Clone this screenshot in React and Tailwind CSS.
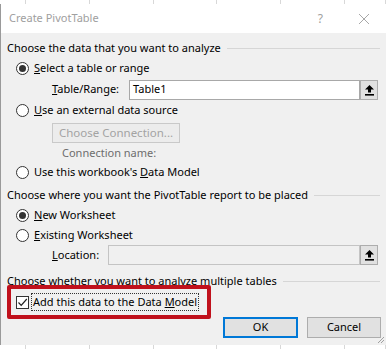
import { useState } from "react";

const FONT = { fontFamily: '"Noto Sans", "Open Sans", Arial, sans-serif' };

function GridStrip({ className }) {
  const cells = [26, 64, 64, 63, 64, 64, 41];
  return (
    <div className={`flex bg-white ${className}`}>
      {cells.map((w, i) => (
        <div key={i} className="h-full border-r border-[#d8d8d8]" style={{ width: w }} />
      ))}
    </div>
  );
}

function Radio({ checked }) {
  return (
    <span className="w-[13px] h-[13px] rounded-full border border-[#333] bg-white flex items-center justify-center shrink-0">
      {checked && <span className="w-[7px] h-[7px] rounded-full bg-[#333]" />}
    </span>
  );
}

function Section({ title }) {
  return (
    <div className="h-[20px] flex items-center pr-[6px]">
      <span className="whitespace-nowrap">{title}</span>
      <span className="flex-1 h-px bg-[#d6d6d6] ml-[6px] mt-[1px]" />
    </div>
  );
}

function RefButton() {
  return (
    <div className="w-[18px] h-[20px] bg-[#e1e1e1] border border-[#adadad] flex items-center justify-center shrink-0">
      <svg width="11" height="12" viewBox="0 0 11 12">
        <path d="M5.5 1 L10 5.5 L7 5.5 L7 8.5 L4 8.5 L4 5.5 L1 5.5 Z" fill="#000" />
        <rect x="1" y="10" width="9" height="1.6" fill="#000" />
      </svg>
    </div>
  );
}

export default function App() {
  const [place, setPlace] = useState("new");
  const [source, setSource] = useState("range");

  return (
    <div className="w-[386px] h-[349px] overflow-hidden bg-white text-[11px] text-black" style={FONT}>
      <GridStrip className="h-[4px]" />

      <div className="h-[341px] border-l border-[#9a9a9a] bg-[#f0f0f0] flex flex-col relative">
        {/* title bar */}
        <div className="h-[29px] bg-white flex items-center pl-[8px] pr-[16px] text-[#a0a0a0]">
          <span className="text-[11px] flex-1">Create PivotTable</span>
          <span className="text-[12px] mr-[35px]">?</span>
          <svg width="12" height="12" viewBox="0 0 12 12">
            <path d="M1 1 L11 11 M11 1 L1 11" stroke="#a8a8a8" strokeWidth="1" />
          </svg>
        </div>

        <div className="flex flex-col pl-[6px] pt-[5px]">
          <Section title="Choose the data that you want to analyze" />

          <div className="h-[21px] flex items-center pl-[9px] gap-[5px]" onClick={() => setSource("range")}>
            <Radio checked={source === "range"} />
            <span><u>S</u>elect a table or range</span>
          </div>

          <div className="h-[21px] flex items-center pl-[45px] pr-[8px]">
            <span className="w-[77px]"><u>T</u>able/Range:</span>
            <div className="flex-1 h-[20px] bg-white border border-[#a8a8a8] flex items-center pl-[3px]">Table1</div>
            <RefButton />
          </div>

          <div className="h-[21px] flex items-center pl-[9px] gap-[5px]" onClick={() => setSource("ext")}>
            <Radio checked={source === "ext"} />
            <span><u>U</u>se an external data source</span>
          </div>

          <div className="h-[20px] mt-[2px] pl-[45px] flex">
            <div className="w-[128px] h-[20px] bg-[#ececec] border border-[#c9c9c9] flex items-center justify-center text-[#a3a3a3] text-[11.5px]">
              Choose Connection...
            </div>
          </div>

          <div className="h-[21px] flex items-center pl-[55px] text-[#6d6d6d]">Connection name:</div>

          <div className="h-[16px] flex items-center pl-[9px] gap-[5px]" onClick={() => setSource("model")}>
            <Radio checked={source === "model"} />
            <span>Use this workbook's <u>D</u>ata Model</span>
          </div>

          <div className="mt-[5px]">
            <Section title="Choose where you want the PivotTable report to be placed" />
          </div>

          <div className="h-[21px] flex items-center pl-[9px] gap-[5px]" onClick={() => setPlace("new")}>
            <Radio checked={place === "new"} />
            <span><u>N</u>ew Worksheet</span>
          </div>

          <div className="h-[18px] flex items-center pl-[9px] gap-[5px]" onClick={() => setPlace("existing")}>
            <Radio checked={place === "existing"} />
            <span><u>E</u>xisting Worksheet</span>
          </div>

          <div className="h-[20px] mt-[1px] flex items-center pl-[45px] pr-[8px]">
            <span className="w-[56px]"><u>L</u>ocation:</span>
            <div className="flex-1 h-[20px] bg-[#f0f0f0] border border-[#c4c4c4]" />
            <RefButton />
          </div>

          <div className="mt-[6px]">
            <Section title="Choose whether you want to analyze multiple tables" />
          </div>

          <div className="h-[18px] mt-[2px] flex items-center pl-[9px] gap-[2px] relative">
            <span className="w-[13px] h-[13px] border border-[#333] bg-white flex items-center justify-center shrink-0">
              <svg width="11" height="11" viewBox="0 0 11 11">
                <path d="M1.5 5.5 L4.2 8.3 L9.8 2" stroke="#222" strokeWidth="1.2" fill="none" />
              </svg>
            </span>
            <span className="h-[18px] border border-dotted border-[#333] px-[1px] flex items-center">
              <span>Add this data to the Data <u>M</u>odel</span>
            </span>
            <div className="absolute left-0 top-[-8px] w-[204px] h-[34px] border-[4px] border-[#c0111c] rounded-[2px] pointer-events-none" />
          </div>

          <div className="h-[21px] mt-[6px] flex justify-end pr-[5px] gap-[9px]">
            <button className="w-[75px] h-[21px] bg-[#e1e1e1] border-2 border-[#0078d7] flex items-center justify-center">OK</button>
            <button className="w-[74px] h-[21px] bg-[#e1e1e1] border border-[#adadad] flex items-center justify-center">Cancel</button>
          </div>
        </div>

        <svg className="absolute right-[1px] bottom-[1px]" width="8" height="8" viewBox="0 0 8 8">
          <path d="M7 1 L1 7 M7 4 L4 7" stroke="#a0a0a0" strokeWidth="1" />
        </svg>
      </div>

      <GridStrip className="h-[4px]" />
    </div>
  );
}
